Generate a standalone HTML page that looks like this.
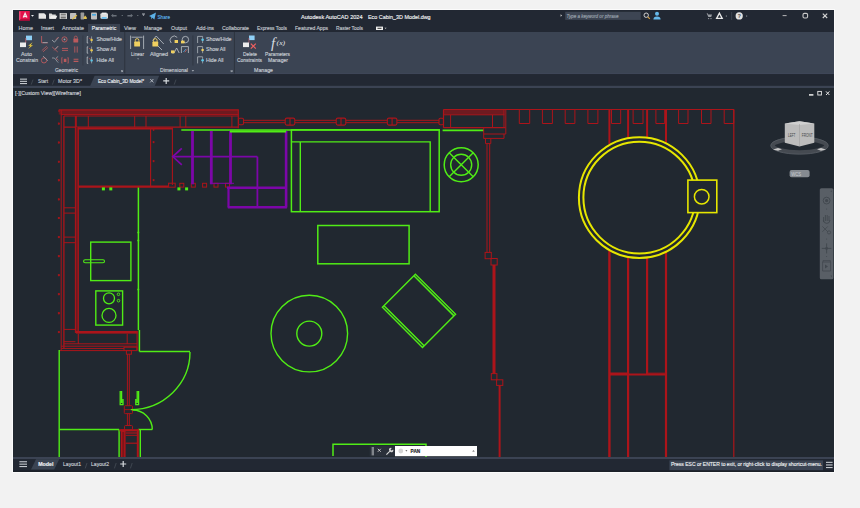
<!DOCTYPE html>
<html><head><meta charset="utf-8">
<style>
html,body{margin:0;padding:0;width:860px;height:508px;overflow:hidden;background:#f2f2f2}
svg{display:block;font-family:"Liberation Sans",sans-serif}
</style></head><body>
<svg width="860" height="508" viewBox="0 0 860 508">
<rect x="0" y="0" width="860" height="508" fill="#f2f2f2" />
<rect x="12" y="9" width="823" height="464" fill="#fbfbfb" />
<rect x="13" y="10" width="821" height="462" fill="#222833" />
<rect x="19.1" y="11" width="10.7" height="9.6" fill="#e3114a" />
<rect x="19.1" y="11.6" width="1.4" height="8.4" fill="#f2507e" />
<rect x="20" y="19.4" width="9.8" height="1.2" fill="#a00a34" />
<path d="M23.2 17.6 L25.1 13.2 L27 17.6 M23.5 17 q1.6 -1.3 3.2 0" stroke="#f6e6ec" stroke-width="1.2" fill="none"/>
<path d="M31 15 h3 l-1.5 1.8z" fill="#e8eaee"/>
<path d="M38.6 13.2 h5.6 l1.8 1.8 v3.8 h-7.4z" fill="#e6e6e6"/>
<path d="M49 13.6 h2.6 l0.8 0.9 h3.4 v4.3 h-6.8z" fill="#d8d8d8"/><path d="M49.6 18.8 l1.3-3 h6.4 l-1.3 3z" fill="#f0f0f0"/>
<rect x="59.6" y="13" width="7.4" height="6" fill="#cfcfcf"  rx="0.6"/>
<rect x="60.8" y="13.6" width="5" height="1.8" fill="#808080" />
<rect x="60.8" y="16.6" width="5" height="1.9" fill="#707070" />
<rect x="70" y="13" width="6.2" height="6" fill="#bdbdbd"  rx="0.6"/>
<path d="M72 19 l4.5-4.2 l0.8 0.8 l-4.5 4.2z" fill="#e9c13a"/>
<rect x="80.6" y="12.6" width="3.6" height="6.8" fill="#9a9a9a"  rx="0.6"/>
<path d="M83.6 17.4 l1.6-1.8 l1.6 1.8 v1.6 h-3.2z" fill="#e0c050"/>
<rect x="91" y="12.6" width="6" height="7" fill="#bfbfbf"  rx="0.8"/>
<rect x="92" y="14" width="4" height="1.6" fill="#4aa8e0" />
<rect x="100.4" y="13.2" width="7.6" height="5.6" fill="#dcdcdc"  rx="1"/>
<rect x="101.8" y="12.6" width="4.8" height="1.6" fill="#f0f0f0" />
<rect x="101.8" y="17" width="4.8" height="1.8" fill="#6cc0f0" />
<path d="M111 15.6 l2.2-1.8 v1.1 h3.4 v1.6 h-3.4 v1.1z" fill="#6a717a"/>
<rect x="121.6" y="15.2" width="1.4" height="0.8" fill="#70777f" />
<path d="M133 15.6 l-2.2-1.8 v1.1 h-3.4 v1.6 h3.4 v1.1z" fill="#6a717a"/>
<rect x="137" y="15.2" width="1.4" height="0.8" fill="#70777f" />
<path d="M142 14.2 h3 l-1.5 1.8z M142 13.3 h3 v0.5 h-3z" fill="#aeb3ba"/>
<path d="M149 16 l7-3.4 l-1.6 6.8 l-2.2-1.6 l-1 1.6 v-2.4z" fill="#5cb0e6"/>
<text x="157.5" y="18.6" font-size="5.4" fill="#5cb0e6" stroke="#5cb0e6" stroke-width="0.15" font-weight="normal" font-style="normal" text-anchor="start" textLength="12.5" lengthAdjust="spacingAndGlyphs">Share</text>
<text x="301" y="19.2" font-size="6.1" fill="#f0f2f4" stroke="#f0f2f4" stroke-width="0.15" font-weight="normal" font-style="normal" text-anchor="start" textLength="61.5" lengthAdjust="spacingAndGlyphs">Autodesk AutoCAD 2024</text>
<text x="368" y="19.2" font-size="6.1" fill="#f0f2f4" stroke="#f0f2f4" stroke-width="0.15" font-weight="normal" font-style="normal" text-anchor="start" textLength="62.6" lengthAdjust="spacingAndGlyphs">Eco Cabin_3D Model.dwg</text>
<path d="M560.6 14.3 l1.4 1.2 l-1.4 1.2z" fill="#e0e0e0"/>
<rect x="565.2" y="11.8" width="75.5" height="8.1" fill="#3d4553" />
<text x="566.5" y="18" font-size="5.2" fill="#9aa2ad" stroke="#9aa2ad" stroke-width="0.15" font-weight="normal" font-style="italic" text-anchor="start" textLength="52" lengthAdjust="spacingAndGlyphs">Type a keyword or phrase</text>
<circle cx="646.2" cy="15.2" r="2.2" stroke="#d0d0d0" stroke-width="1" fill="none"/><path d="M647.8 16.8 l2 2" stroke="#d8a040" stroke-width="1.2"/>
<circle cx="657" cy="13.8" r="2" fill="#66b8ea"/><path d="M653.4 19.6 q0-3.2 3.6-3.2 q3.6 0 3.6 3.2z" fill="#66b8ea"/>
<path d="M706.6 13.2 h1 l0.6 1.2 h3.8 l-0.8 2.6 h-2.8z" fill="#9a9ea4"/><circle cx="708.6" cy="18.6" r="0.7" fill="#9a9ea4"/><circle cx="711" cy="18.6" r="0.7" fill="#9a9ea4"/>
<path d="M716.6 18.4 L719.4 13.2 L722.2 18.4 Z" stroke="#e8e8e8" stroke-width="1.3" fill="none"/>
<rect x="725.8" y="15.6" width="1.2" height="0.9" fill="#9aa0a6" />
<rect x="731.4" y="12" width="0.7" height="8" fill="#454c57" />
<circle cx="739.2" cy="15.9" r="3.6" fill="#e2e2e2"/>
<text x="739.2" y="18" font-size="5" fill="#555" stroke="#555" stroke-width="0.15" font-weight="bold" font-style="normal" text-anchor="middle">?</text>
<rect x="746" y="15.6" width="1.2" height="0.9" fill="#9aa0a6" />
<rect x="782.6" y="15.2" width="4" height="0.9" fill="#c8c8c8" />
<rect x="803" y="13.4" width="4.6" height="4.6" rx="1.4" stroke="#c8c8c8" stroke-width="1.1" fill="none"/>
<path d="M822.8 13.6 l4.4 4.4 M827.2 13.6 l-4.4 4.4" stroke="#d8d8d8" stroke-width="1.1"/>
<rect x="88" y="23.9" width="32.1" height="8.2" fill="#3a4250" />
<text x="18.6" y="29.8" font-size="5.6" fill="#c4c9d0" stroke="#c4c9d0" stroke-width="0.15" font-weight="normal" font-style="normal" text-anchor="start" textLength="14.4" lengthAdjust="spacingAndGlyphs">Home</text>
<text x="41" y="29.8" font-size="5.6" fill="#c4c9d0" stroke="#c4c9d0" stroke-width="0.15" font-weight="normal" font-style="normal" text-anchor="start" textLength="13" lengthAdjust="spacingAndGlyphs">Insert</text>
<text x="62" y="29.8" font-size="5.6" fill="#c4c9d0" stroke="#c4c9d0" stroke-width="0.15" font-weight="normal" font-style="normal" text-anchor="start" textLength="22" lengthAdjust="spacingAndGlyphs">Annotate</text>
<text x="91.8" y="29.8" font-size="5.6" fill="#eef1f4" stroke="#eef1f4" stroke-width="0.15" font-weight="normal" font-style="normal" text-anchor="start" textLength="24.4" lengthAdjust="spacingAndGlyphs">Parametric</text>
<text x="124" y="29.8" font-size="5.6" fill="#c4c9d0" stroke="#c4c9d0" stroke-width="0.15" font-weight="normal" font-style="normal" text-anchor="start" textLength="12" lengthAdjust="spacingAndGlyphs">View</text>
<text x="144" y="29.8" font-size="5.6" fill="#c4c9d0" stroke="#c4c9d0" stroke-width="0.15" font-weight="normal" font-style="normal" text-anchor="start" textLength="18" lengthAdjust="spacingAndGlyphs">Manage</text>
<text x="171" y="29.8" font-size="5.6" fill="#c4c9d0" stroke="#c4c9d0" stroke-width="0.15" font-weight="normal" font-style="normal" text-anchor="start" textLength="16" lengthAdjust="spacingAndGlyphs">Output</text>
<text x="196" y="29.8" font-size="5.6" fill="#c4c9d0" stroke="#c4c9d0" stroke-width="0.15" font-weight="normal" font-style="normal" text-anchor="start" textLength="18" lengthAdjust="spacingAndGlyphs">Add-ins</text>
<text x="222" y="29.8" font-size="5.6" fill="#c4c9d0" stroke="#c4c9d0" stroke-width="0.15" font-weight="normal" font-style="normal" text-anchor="start" textLength="27" lengthAdjust="spacingAndGlyphs">Collaborate</text>
<text x="257" y="29.8" font-size="5.6" fill="#c4c9d0" stroke="#c4c9d0" stroke-width="0.15" font-weight="normal" font-style="normal" text-anchor="start" textLength="30" lengthAdjust="spacingAndGlyphs">Express Tools</text>
<text x="295" y="29.8" font-size="5.6" fill="#c4c9d0" stroke="#c4c9d0" stroke-width="0.15" font-weight="normal" font-style="normal" text-anchor="start" textLength="33" lengthAdjust="spacingAndGlyphs">Featured Apps</text>
<text x="336" y="29.8" font-size="5.6" fill="#c4c9d0" stroke="#c4c9d0" stroke-width="0.15" font-weight="normal" font-style="normal" text-anchor="start" textLength="27" lengthAdjust="spacingAndGlyphs">Raster Tools</text>
<rect x="376" y="26.6" width="7" height="3.4" fill="#f0f0f0" />
<rect x="377.5" y="27.8" width="4" height="1" fill="#333" />
<path d="M384.6 27.8 h2 l-1 1.2z" fill="#c8c8c8"/>
<rect x="13" y="32" width="821" height="42" fill="#3b4453" />
<rect x="13" y="73.2" width="821" height="1" fill="#40485a" />
<rect x="26" y="35.6" width="6" height="4.6" fill="#8fd0f6" />
<rect x="25.4" y="38" width="0.8" height="5" fill="#c06070" />
<rect x="20" y="42.5" width="6" height="4.6" fill="#ececec" />
<path d="M32.6 42.2 l-4.4 3.6 h2.4 l-2.6 3.2 l5 -3.8 h-2.4z" fill="#f2cf3a"/>
<text x="21" y="56.2" font-size="5.6" fill="#c9ced5" stroke="#c9ced5" stroke-width="0.15" font-weight="normal" font-style="normal" text-anchor="start" textLength="11" lengthAdjust="spacingAndGlyphs">Auto</text>
<text x="16" y="62" font-size="5.6" fill="#c9ced5" stroke="#c9ced5" stroke-width="0.15" font-weight="normal" font-style="normal" text-anchor="start" textLength="22" lengthAdjust="spacingAndGlyphs">Constrain</text>
<path d="M41.6 36 v6.8 h6.2" stroke="#bb5a5d" stroke-width="0.9" fill="none"/><path d="M42.6 42.6 h5" stroke="#9ea4ab" stroke-width="0.9"/>
<path d="M52 40 l2.4 2.2 l4.2-4.8" stroke="#9ea4ab" stroke-width="0.9" fill="none"/><path d="M56 39.5 l2.4-2.4" stroke="#bb5a5d" stroke-width="0.9"/>
<circle cx="64.5" cy="39.4" r="2.6" stroke="#bb5a5d" stroke-width="0.9" fill="none"/><circle cx="64.5" cy="39.4" r="0.9" fill="#9ea4ab"/>
<rect x="73.4" y="38.6" width="4.8" height="4" rx="0.6" fill="#bb5a5d"/><path d="M74.3 38.8 v-1.2 a1.5 1.5 0 0 1 3 0 v1.2" stroke="#bb5a5d" stroke-width="0.8" fill="none"/>
<path d="M41.8 50.6 l5-4.4 M43 51.8 l5-4.4" stroke="#bb5a5d" stroke-width="0.8"/>
<path d="M52.2 47 l5.6 5 M54.2 50.4 l3.8-4" stroke="#bb5a5d" stroke-width="0.8"/><path d="M55.4 49 l2.6-2.8" stroke="#9ea4ab" stroke-width="0.8"/>
<path d="M62 48.4 h6 M62 50.4 h6" stroke="#bb5a5d" stroke-width="0.9"/>
<path d="M74.8 46.4 v6.2 M77.2 46.4 v6.2" stroke="#bb5a5d" stroke-width="0.9"/>
<circle cx="44" cy="60.4" r="2.6" stroke="#bb5a5d" stroke-width="0.9" fill="none"/><path d="M43 56 l4.8 4.8" stroke="#9ea4ab" stroke-width="0.8"/>
<path d="M52 58 q2.4 -0.6 3.6 1.2 q1.2 2 2.6 3.4 M55.8 58.4 l2.4 -2" stroke="#9ea4ab" stroke-width="0.8" fill="none"/><path d="M56 58 l2.6 2.4" stroke="#bb5a5d" stroke-width="0.8"/>
<path d="M62.4 57.6 h-0.6 v5.6 h0.6 M67.6 57.6 h0.6 v5.6 h-0.6" stroke="#bb5a5d" stroke-width="0.9" fill="none"/><rect x="63.8" y="58.8" width="2.6" height="3.2" fill="#bb5a5d"/>
<path d="M73.6 59.2 h4.8 M73.6 61.4 h4.8" stroke="#bb5a5d" stroke-width="1.1"/>
<rect x="82.6" y="35.5" width="0.7" height="30" fill="#323944" />
<text x="54.9" y="72" font-size="5.6" fill="#c9ced5" stroke="#c9ced5" stroke-width="0.15" font-weight="normal" font-style="normal" text-anchor="start" textLength="23" lengthAdjust="spacingAndGlyphs">Geometric</text>
<path d="M121 70 l1.6 1.6 M122.6 70 v1.6 h-1.6" stroke="#bfc4ca" stroke-width="0.6" fill="none"/>
<path d="M69 70.4 l1.2 1.2" stroke="#5f6670" stroke-width="0"/>
<path d="M88.2 36.6 h-1 v6.4 h1" stroke="#c0c5cc" stroke-width="0.8" fill="none"/><path d="M88.8 38.0 l2.8 1.4" stroke="#d0605a" stroke-width="0.7"/><path d="M91.6 36.4 v6.6" stroke="#c0c5cc" stroke-width="0.6"/><circle cx="91.6" cy="40.0" r="1.2" fill="#e8c84a"/>
<path d="M88.2 46.8 h-1 v6.4 h1" stroke="#c0c5cc" stroke-width="0.8" fill="none"/><path d="M88.8 48.199999999999996 l2.8 1.4" stroke="#d0605a" stroke-width="0.7"/><path d="M91.6 46.599999999999994 v6.6" stroke="#c0c5cc" stroke-width="0.6"/><circle cx="91.6" cy="50.199999999999996" r="1.2" fill="#e8c84a"/>
<path d="M88.2 57 h-1 v6.4 h1" stroke="#c0c5cc" stroke-width="0.8" fill="none"/><path d="M88.8 58.4 l2.8 1.4" stroke="#d0605a" stroke-width="0.7"/><path d="M91.6 56.8 v6.6" stroke="#c0c5cc" stroke-width="0.6"/><circle cx="91.6" cy="60.4" r="1.2" fill="#5cc8e8"/>
<text x="96.5" y="41.1" font-size="5.6" fill="#c9ced5" stroke="#c9ced5" stroke-width="0.15" font-weight="normal" font-style="normal" text-anchor="start" textLength="25.5" lengthAdjust="spacingAndGlyphs">Show/Hide</text>
<text x="96.5" y="51.3" font-size="5.6" fill="#c9ced5" stroke="#c9ced5" stroke-width="0.15" font-weight="normal" font-style="normal" text-anchor="start" textLength="19.5" lengthAdjust="spacingAndGlyphs">Show All</text>
<text x="96.5" y="61.5" font-size="5.6" fill="#c9ced5" stroke="#c9ced5" stroke-width="0.15" font-weight="normal" font-style="normal" text-anchor="start" textLength="17.5" lengthAdjust="spacingAndGlyphs">Hide All</text>
<rect x="124.2" y="32" width="1.1" height="41.5" fill="#2e3540" />
<path d="M130.6 35.6 v13.4 M143.6 35.6 v13.4 M131.6 37.2 h11" stroke="#c0c5cc" stroke-width="0.8" fill="none"/>
<rect x="134.2" y="41.6" width="5.8" height="5" rx="0.6" fill="#f0d060"/><path d="M135.3 41.8 v-1.4 a1.8 1.8 0 0 1 3.6 0 v1.4" stroke="#f0d060" stroke-width="0.9" fill="none"/>
<text x="131" y="56.2" font-size="5.6" fill="#c9ced5" stroke="#c9ced5" stroke-width="0.15" font-weight="normal" font-style="normal" text-anchor="start" textLength="13" lengthAdjust="spacingAndGlyphs">Linear</text>
<path d="M137.2 58.6 h1.8 l-0.9 1z" fill="#c0c5cc"/>
<path d="M152.6 40.6 l3.6-4.6 l7.6 8 M157 45 l5 5" stroke="#c0c5cc" stroke-width="0.8" fill="none"/>
<rect x="152.4" y="41.6" width="5.8" height="5" rx="0.6" fill="#f0d060"/><path d="M153.5 41.8 v-1.4 a1.8 1.8 0 0 1 3.6 0 v1.4" stroke="#f0d060" stroke-width="0.9" fill="none"/>
<text x="150" y="56.2" font-size="5.6" fill="#c9ced5" stroke="#c9ced5" stroke-width="0.15" font-weight="normal" font-style="normal" text-anchor="start" textLength="18" lengthAdjust="spacingAndGlyphs">Aligned</text>
<path d="M171.2 43 a4 4 0 0 1 6 -5.6" stroke="#c0c5cc" stroke-width="0.8" fill="none"/><rect x="174.6" y="40" width="3.4" height="3" fill="#f0d060"/>
<circle cx="185.4" cy="39.6" r="3.2" stroke="#c0c5cc" stroke-width="0.8" fill="none"/><rect x="181" y="40.6" width="3.6" height="2.8" fill="#f0d060"/>
<path d="M172 53 h2 l2.6-5 l2.6 5" stroke="#c0c5cc" stroke-width="0.8" fill="none"/><rect x="171" y="50.4" width="3.6" height="2.8" fill="#f0d060"/>
<path d="M181.4 53 v-6.4 h7 v6.4" stroke="#c0c5cc" stroke-width="0.8" fill="none"/><path d="M183.4 52 l2.4 -3" stroke="#4aa8e0" stroke-width="0.8"/><path d="M184.8 52.2 l2.4 -3" stroke="#d0605a" stroke-width="0.8"/>
<rect x="192.6" y="35.5" width="0.7" height="30" fill="#2c333d" />
<text x="160" y="72" font-size="5.6" fill="#c9ced5" stroke="#c9ced5" stroke-width="0.15" font-weight="normal" font-style="normal" text-anchor="start" textLength="28" lengthAdjust="spacingAndGlyphs">Dimensional</text>
<path d="M191.6 70.2 h2.6 l-1.3 1.4z" fill="#c0c5cc"/>
<path d="M197.6 43.0 v-6.6 h5" stroke="#c0c5cc" stroke-width="0.7" fill="none"/><path d="M202.6 36.4 v6.6" stroke="#c0c5cc" stroke-width="0.6"/><circle cx="202.6" cy="39.800000000000004" r="1.3" fill="#5cc8e8"/>
<path d="M197.6 53.199999999999996 v-6.6 h5" stroke="#c0c5cc" stroke-width="0.7" fill="none"/><path d="M202.6 46.599999999999994 v6.6" stroke="#c0c5cc" stroke-width="0.6"/><circle cx="202.6" cy="50.0" r="1.3" fill="#f0d060"/>
<path d="M197.6 63.4 v-6.6 h5" stroke="#c0c5cc" stroke-width="0.7" fill="none"/><path d="M202.6 56.8 v6.6" stroke="#c0c5cc" stroke-width="0.6"/><circle cx="202.6" cy="60.2" r="1.3" fill="#5cc8e8"/>
<text x="206" y="41.1" font-size="5.6" fill="#c9ced5" stroke="#c9ced5" stroke-width="0.15" font-weight="normal" font-style="normal" text-anchor="start" textLength="25.5" lengthAdjust="spacingAndGlyphs">Show/Hide</text>
<text x="206" y="51.3" font-size="5.6" fill="#c9ced5" stroke="#c9ced5" stroke-width="0.15" font-weight="normal" font-style="normal" text-anchor="start" textLength="19.5" lengthAdjust="spacingAndGlyphs">Show All</text>
<text x="206" y="61.5" font-size="5.6" fill="#c9ced5" stroke="#c9ced5" stroke-width="0.15" font-weight="normal" font-style="normal" text-anchor="start" textLength="17.5" lengthAdjust="spacingAndGlyphs">Hide All</text>
<path d="M230.6 70 l1.6 1.6 M232.2 70 v1.6 h-1.6" stroke="#bfc4ca" stroke-width="0.6" fill="none"/>
<rect x="233.9" y="32" width="1.1" height="41.5" fill="#2e3540" />
<rect x="249" y="35.5" width="5.6" height="4.6" fill="#8fd0f6" />
<rect x="248.6" y="38" width="0.7" height="5" fill="#c06070" />
<rect x="243" y="42.5" width="6" height="4.6" fill="#ececec" />
<path d="M250.8 43.6 l5 5 M255.8 43.6 l-5 5" stroke="#f06060" stroke-width="1.2"/>
<text x="243" y="56.4" font-size="5.6" fill="#c9ced5" stroke="#c9ced5" stroke-width="0.15" font-weight="normal" font-style="normal" text-anchor="start" textLength="14" lengthAdjust="spacingAndGlyphs">Delete</text>
<text x="237" y="62.4" font-size="5.6" fill="#c9ced5" stroke="#c9ced5" stroke-width="0.15" font-weight="normal" font-style="normal" text-anchor="start" textLength="25" lengthAdjust="spacingAndGlyphs">Constraints</text>
<text x="271" y="47.6" font-size="15" fill="#d8dce1" font-style="italic" font-family="Liberation Serif">f</text>
<text x="276.6" y="45.2" font-size="6.6" fill="#e4e7eb" font-style="italic" font-family="Liberation Serif" textLength="8.6" lengthAdjust="spacingAndGlyphs">(x)</text>
<text x="265" y="56.4" font-size="5.6" fill="#c9ced5" stroke="#c9ced5" stroke-width="0.15" font-weight="normal" font-style="normal" text-anchor="start" textLength="25" lengthAdjust="spacingAndGlyphs">Parameters</text>
<text x="268" y="62.4" font-size="5.6" fill="#c9ced5" stroke="#c9ced5" stroke-width="0.15" font-weight="normal" font-style="normal" text-anchor="start" textLength="20" lengthAdjust="spacingAndGlyphs">Manager</text>
<text x="254" y="72" font-size="5.6" fill="#c9ced5" stroke="#c9ced5" stroke-width="0.15" font-weight="normal" font-style="normal" text-anchor="start" textLength="19" lengthAdjust="spacingAndGlyphs">Manage</text>
<rect x="13" y="74.3" width="821" height="12" fill="#222833" />
<rect x="13" y="85.8" width="821" height="2.2" fill="#3b4353" />
<path d="M90 86.2 L94.6 75.8 H159.2 L154.6 86.2 Z" fill="#3b4453"/>
<rect x="20" y="78.6" width="7" height="1.1" fill="#c4c8ce" />
<rect x="20" y="80.8" width="7" height="1.1" fill="#c4c8ce" />
<rect x="20" y="83.0" width="7" height="1.1" fill="#c4c8ce" />
<path d="M31.2 84.6 l1.8-5 M52.4 84.6 l1.8-5 M174.2 84.6 l1.8-5" stroke="#4a515b" stroke-width="0.7"/>
<text x="38" y="83.2" font-size="5.6" fill="#c9ced5" stroke="#c9ced5" stroke-width="0.15" font-weight="normal" font-style="normal" text-anchor="start" textLength="10" lengthAdjust="spacingAndGlyphs">Start</text>
<text x="58" y="83.2" font-size="5.6" fill="#c9ced5" stroke="#c9ced5" stroke-width="0.15" font-weight="normal" font-style="normal" text-anchor="start" textLength="24" lengthAdjust="spacingAndGlyphs">Motor 3D*</text>
<text x="98" y="83.2" font-size="5.6" fill="#eef1f4" stroke="#eef1f4" stroke-width="0.15" font-weight="normal" font-style="normal" text-anchor="start" textLength="46" lengthAdjust="spacingAndGlyphs">Eco Cabin_3D Model*</text>
<path d="M150.2 79 l3.2 3.4 M153.4 79 l-3.2 3.4" stroke="#c9ced5" stroke-width="0.8"/>
<path d="M163.2 80.9 h6 M166.2 77.9 v6" stroke="#d6dade" stroke-width="1.2"/>
<rect x="13" y="88" width="821" height="369" fill="#212830" />
<text x="15" y="95.2" font-size="5.2" fill="#cfd3d9" stroke="#cfd3d9" stroke-width="0.15" font-weight="normal" font-style="normal" text-anchor="start" textLength="66" lengthAdjust="spacingAndGlyphs">[-][Custom View][Wireframe]</text>
<rect x="58.7" y="110" width="179.6" height="4.6" fill="#6e1a20"/>
<line x1="58.7" y1="109.9" x2="238.5" y2="109.9" stroke="#ac141a" stroke-width="1.2"/>
<line x1="61" y1="114.6" x2="238.5" y2="114.6" stroke="#ac141a" stroke-width="1"/>
<line x1="64" y1="116" x2="238.3" y2="116" stroke="#ac141a" stroke-width="1"/>
<line x1="64" y1="127.2" x2="238.3" y2="127.2" stroke="#ac141a" stroke-width="1.2"/>
<line x1="238.3" y1="109.4" x2="238.3" y2="128.2" stroke="#ac141a" stroke-width="1.2"/>
<line x1="76.3" y1="116" x2="76.3" y2="127.2" stroke="#ac141a" stroke-width="1"/>
<line x1="88.3" y1="116" x2="88.3" y2="127.2" stroke="#ac141a" stroke-width="1"/>
<line x1="134.7" y1="116" x2="134.7" y2="127.2" stroke="#ac141a" stroke-width="1"/>
<line x1="146.0" y1="116" x2="146.0" y2="127.2" stroke="#ac141a" stroke-width="1"/>
<line x1="180.1" y1="116" x2="180.1" y2="127.2" stroke="#ac141a" stroke-width="1"/>
<line x1="185.8" y1="116" x2="185.8" y2="127.2" stroke="#ac141a" stroke-width="1"/>
<line x1="231.9" y1="116" x2="231.9" y2="127.2" stroke="#ac141a" stroke-width="1"/>
<line x1="59" y1="109.9" x2="59" y2="112" stroke="#ac141a" stroke-width="1"/>
<line x1="61.2" y1="110" x2="61.2" y2="350.5" stroke="#ac141a" stroke-width="1"/>
<line x1="63.9" y1="116" x2="63.9" y2="348" stroke="#ac141a" stroke-width="1.3"/>
<rect x="75.4" y="127" width="2.9" height="205" fill="#6e1a20"/>
<line x1="75.4" y1="116" x2="75.4" y2="333" stroke="#ac141a" stroke-width="1.1"/>
<line x1="78.3" y1="127" x2="78.3" y2="333" stroke="#ac141a" stroke-width="1.2"/>
<line x1="64" y1="207.8" x2="75.4" y2="207.8" stroke="#ac141a" stroke-width="1"/>
<line x1="64" y1="213.1" x2="75.4" y2="213.1" stroke="#ac141a" stroke-width="1"/>
<line x1="64" y1="237.1" x2="75.4" y2="237.1" stroke="#ac141a" stroke-width="1"/>
<line x1="64" y1="242.7" x2="75.4" y2="242.7" stroke="#ac141a" stroke-width="1"/>
<line x1="64" y1="329.4" x2="75.4" y2="329.4" stroke="#ac141a" stroke-width="1"/>
<rect x="58.2" y="122.89999999999999" width="1.4" height="1.4" stroke="#ac141a" stroke-width="0.6" fill="#ac141a" rx="0"/>
<rect x="58.2" y="141.8" width="1.4" height="1.4" stroke="#ac141a" stroke-width="0.6" fill="#ac141a" rx="0"/>
<rect x="58.2" y="161.10000000000002" width="1.4" height="1.4" stroke="#ac141a" stroke-width="0.6" fill="#ac141a" rx="0"/>
<rect x="58.2" y="179.60000000000002" width="1.4" height="1.4" stroke="#ac141a" stroke-width="0.6" fill="#ac141a" rx="0"/>
<rect x="58.2" y="198.70000000000002" width="1.4" height="1.4" stroke="#ac141a" stroke-width="0.6" fill="#ac141a" rx="0"/>
<rect x="58.2" y="217.3" width="1.4" height="1.4" stroke="#ac141a" stroke-width="0.6" fill="#ac141a" rx="0"/>
<rect x="58.2" y="236.4" width="1.4" height="1.4" stroke="#ac141a" stroke-width="0.6" fill="#ac141a" rx="0"/>
<rect x="58.2" y="255.5" width="1.4" height="1.4" stroke="#ac141a" stroke-width="0.6" fill="#ac141a" rx="0"/>
<rect x="58.2" y="274.5" width="1.4" height="1.4" stroke="#ac141a" stroke-width="0.6" fill="#ac141a" rx="0"/>
<rect x="58.2" y="293.5" width="1.4" height="1.4" stroke="#ac141a" stroke-width="0.6" fill="#ac141a" rx="0"/>
<rect x="58.2" y="312.6" width="1.4" height="1.4" stroke="#ac141a" stroke-width="0.6" fill="#ac141a" rx="0"/>
<rect x="58.2" y="331.40000000000003" width="1.4" height="1.4" stroke="#ac141a" stroke-width="0.6" fill="#ac141a" rx="0"/>
<line x1="78.3" y1="128.6" x2="172.4" y2="128.6" stroke="#ac141a" stroke-width="1.8"/>
<line x1="150.6" y1="128.6" x2="150.6" y2="186" stroke="#ac141a" stroke-width="1.1"/>
<rect x="153" y="129.4" width="1.1" height="1.2" stroke="#ac141a" stroke-width="0.5" fill="#ac141a" rx="0"/>
<rect x="153" y="141.70000000000002" width="1.1" height="1.2" stroke="#ac141a" stroke-width="0.5" fill="#ac141a" rx="0"/>
<rect x="153" y="160.70000000000002" width="1.1" height="1.2" stroke="#ac141a" stroke-width="0.5" fill="#ac141a" rx="0"/>
<rect x="153" y="179.70000000000002" width="1.1" height="1.2" stroke="#ac141a" stroke-width="0.5" fill="#ac141a" rx="0"/>
<line x1="172.4" y1="127.5" x2="172.4" y2="185" stroke="#ac141a" stroke-width="1.1"/>
<line x1="78.3" y1="186.6" x2="168.5" y2="186.6" stroke="#ac141a" stroke-width="2.2"/>
<rect x="168.6" y="183.2" width="6.6" height="4" stroke="#ac141a" stroke-width="1" fill="none" rx="0"/>
<rect x="179.8" y="183.3" width="4" height="3.8" stroke="#ac141a" stroke-width="1" fill="none" rx="0"/>
<rect x="191.3" y="183.3" width="4" height="3.8" stroke="#ac141a" stroke-width="1" fill="none" rx="0"/>
<rect x="202.6" y="183.3" width="4" height="3.8" stroke="#ac141a" stroke-width="1" fill="none" rx="0"/>
<rect x="214.0" y="183.3" width="4" height="3.8" stroke="#ac141a" stroke-width="1" fill="none" rx="0"/>
<rect x="225.5" y="183.3" width="4" height="3.8" stroke="#ac141a" stroke-width="1" fill="none" rx="0"/>
<rect x="101.9" y="187.4" width="3" height="3" fill="#50ec16"/>
<rect x="109.3" y="187.4" width="3" height="3" fill="#50ec16"/>
<rect x="177.4" y="187.4" width="3" height="3" fill="#50ec16"/>
<rect x="185.1" y="187.4" width="3" height="3" fill="#50ec16"/>
<line x1="138.4" y1="187.6" x2="138.4" y2="330" stroke="#50ec16" stroke-width="1.5"/>
<line x1="139.4" y1="330" x2="139.4" y2="351.4" stroke="#50ec16" stroke-width="1.5"/>
<circle cx="138.3" cy="232.4" r="1" fill="#50ec16"/>
<circle cx="138.3" cy="240.4" r="1" fill="#50ec16"/>
<circle cx="138.3" cy="289.5" r="1" fill="#50ec16"/>
<rect x="90.7" y="242.1" width="40.2" height="38.5" stroke="#50ec16" stroke-width="1.4" fill="none" rx="0"/>
<rect x="83.6" y="259.8" width="20.9" height="3" stroke="#50ec16" stroke-width="1.1" fill="none" rx="1.5"/>
<rect x="95.8" y="290.9" width="26.8" height="34.2" stroke="#50ec16" stroke-width="1.4" fill="none" rx="0"/>
<circle cx="109" cy="298.3" r="5.5" stroke="#50ec16" stroke-width="1.3" fill="none"/>
<circle cx="109" cy="315.4" r="7" stroke="#50ec16" stroke-width="1.3" fill="none"/>
<circle cx="118.5" cy="294.3" r="1.3" stroke="#50ec16" stroke-width="0.9" fill="none"/>
<circle cx="118.5" cy="300.7" r="1.3" stroke="#50ec16" stroke-width="0.9" fill="none"/>
<rect x="76" y="331" width="61.7" height="2.6" fill="#ac141a"/>
<line x1="78.3" y1="333.6" x2="78.3" y2="344.1" stroke="#ac141a" stroke-width="1.1"/>
<line x1="127.2" y1="333.6" x2="127.2" y2="344.1" stroke="#ac141a" stroke-width="1"/>
<line x1="137.1" y1="331" x2="137.1" y2="350.3" stroke="#ac141a" stroke-width="1.1"/>
<line x1="64" y1="341.7" x2="75.4" y2="341.7" stroke="#ac141a" stroke-width="1"/>
<line x1="64" y1="343.8" x2="137.1" y2="343.8" stroke="#ac141a" stroke-width="1"/>
<line x1="61.2" y1="346.2" x2="137.1" y2="346.2" stroke="#ac141a" stroke-width="1"/>
<line x1="61.2" y1="348.5" x2="124" y2="348.5" stroke="#ac141a" stroke-width="0.9"/>
<line x1="59.2" y1="350.6" x2="124" y2="350.6" stroke="#ac141a" stroke-width="1"/>
<rect x="124" y="347.2" width="13" height="3.4" stroke="#ac141a" stroke-width="1" fill="none" rx="0"/>
<rect x="126.4" y="350.6" width="5" height="3.6" stroke="#ac141a" stroke-width="1" fill="none" rx="0"/>
<line x1="59.2" y1="350" x2="59.2" y2="457" stroke="#50ec16" stroke-width="1.4"/>
<line x1="139.4" y1="351.4" x2="190" y2="351.4" stroke="#50ec16" stroke-width="1.5"/>
<line x1="59.2" y1="429.5" x2="119" y2="429.5" stroke="#50ec16" stroke-width="1.4"/>
<line x1="138" y1="429.5" x2="152.3" y2="429.5" stroke="#50ec16" stroke-width="1.4"/>
<line x1="119.1" y1="429.5" x2="119.1" y2="457" stroke="#50ec16" stroke-width="1.4"/>
<line x1="140.3" y1="429.5" x2="140.3" y2="457" stroke="#50ec16" stroke-width="1.4"/>
<line x1="127.4" y1="354" x2="127.4" y2="405.7" stroke="#ac141a" stroke-width="1"/>
<line x1="129.3" y1="354" x2="129.3" y2="405.7" stroke="#ac141a" stroke-width="1"/>
<rect x="124.3" y="405.7" width="8.2" height="7.9" stroke="#ac141a" stroke-width="1" fill="none" rx="1"/>
<line x1="124.3" y1="409.6" x2="132.5" y2="409.6" stroke="#ac141a" stroke-width="0.9"/>
<line x1="127.4" y1="413.6" x2="127.4" y2="425.5" stroke="#ac141a" stroke-width="1"/>
<line x1="129.3" y1="413.6" x2="129.3" y2="425.5" stroke="#ac141a" stroke-width="1"/>
<rect x="124.5" y="425.5" width="8" height="4.4" stroke="#ac141a" stroke-width="1" fill="none" rx="1"/>
<path d="M130.8 409.6 A59.5 57.6 0 0 0 190 352" stroke="#50ec16" stroke-width="1.4" fill="none"/>
<path d="M132.5 410 A19.8 19.6 0 0 1 152.3 429.6" stroke="#50ec16" stroke-width="1.4" fill="none"/>
<path d="M120.2 391 v13.6 h2.8 v-5.6 M121.6 391 v12" stroke="#50ec16" stroke-width="1.3" fill="none"/>
<path d="M138.6 391 v13.6 h-2.8 v-5.6 M137.2 391 v12" stroke="#50ec16" stroke-width="1.3" fill="none"/>
<rect x="119.6" y="429.2" width="19.4" height="2.2" fill="#ac141a"/>
<rect x="120.8" y="429.2" width="4.8" height="28" fill="#ac141a"/>
<rect x="122.3" y="432" width="1.8" height="25" fill="#7c1419"/>
<line x1="137.8" y1="429.2" x2="137.8" y2="457" stroke="#ac141a" stroke-width="2"/>
<line x1="125.6" y1="433" x2="137" y2="433" stroke="#ac141a" stroke-width="1.2"/>
<line x1="125.6" y1="435.3" x2="137" y2="435.3" stroke="#ac141a" stroke-width="1"/>
<line x1="125.6" y1="443.2" x2="137" y2="443.2" stroke="#ac141a" stroke-width="1.2"/>
<line x1="172.5" y1="156.6" x2="257.4" y2="156.6" stroke="#7c06a8" stroke-width="1.7"/>
<path d="M181.8 148.3 L172.8 156.6 L181.8 164.9" stroke="#7c06a8" stroke-width="1.7" fill="none"/>
<line x1="192.5" y1="131" x2="192.5" y2="184.3" stroke="#7c06a8" stroke-width="2.8"/>
<line x1="211.3" y1="131" x2="211.3" y2="184.3" stroke="#7c06a8" stroke-width="2.8"/>
<line x1="230.5" y1="131" x2="230.5" y2="184.3" stroke="#7c06a8" stroke-width="2.8"/>
<line x1="286.1" y1="131" x2="286.1" y2="207.5" stroke="#7c06a8" stroke-width="2.6"/>
<line x1="257.4" y1="156.6" x2="257.4" y2="207" stroke="#7c06a8" stroke-width="1.8"/>
<line x1="211" y1="183.3" x2="234" y2="183.3" stroke="#7c06a8" stroke-width="1"/>
<line x1="227" y1="187.8" x2="286.1" y2="187.8" stroke="#7c06a8" stroke-width="2.6"/>
<line x1="228.5" y1="187" x2="228.5" y2="207.5" stroke="#7c06a8" stroke-width="2.2"/>
<line x1="227.8" y1="207.3" x2="286.9" y2="207.3" stroke="#7c06a8" stroke-width="2.6"/>
<line x1="181.3" y1="130" x2="440" y2="130" stroke="#50ec16" stroke-width="1.5"/>
<line x1="230" y1="131.4" x2="286" y2="131.4" stroke="#50ec16" stroke-width="2"/>
<line x1="442.6" y1="130.4" x2="484" y2="130.4" stroke="#50ec16" stroke-width="1.7"/>
<line x1="243.5" y1="120.3" x2="439" y2="120.3" stroke="#ac141a" stroke-width="1"/>
<line x1="243.5" y1="122.7" x2="439" y2="122.7" stroke="#ac141a" stroke-width="1"/>
<rect x="238.5" y="118.3" width="5" height="6.5" stroke="#ac141a" stroke-width="1.1" fill="#212830" rx="1.2"/>
<rect x="285.2" y="118.1" width="9.6" height="7" stroke="#ac141a" stroke-width="1.1" fill="#212830" rx="1.6"/>
<line x1="290.0" y1="118.1" x2="290.0" y2="125.1" stroke="#ac141a" stroke-width="1.1"/>
<rect x="336.2" y="118.1" width="9.6" height="7" stroke="#ac141a" stroke-width="1.1" fill="#212830" rx="1.6"/>
<line x1="341.0" y1="118.1" x2="341.0" y2="125.1" stroke="#ac141a" stroke-width="1.1"/>
<rect x="387.3" y="118.1" width="9.6" height="7" stroke="#ac141a" stroke-width="1.1" fill="#212830" rx="1.6"/>
<line x1="392.1" y1="118.1" x2="392.1" y2="125.1" stroke="#ac141a" stroke-width="1.1"/>
<rect x="439" y="118.3" width="4.5" height="6.5" stroke="#ac141a" stroke-width="1.1" fill="#212830" rx="1.2"/>
<rect x="291.4" y="129.8" width="147.8" height="81.9" stroke="#50ec16" stroke-width="1.5" fill="none" rx="0"/>
<path d="M291.4 141.9 H430.2 V211.7 M300.3 141.9 V211.7" stroke="#50ec16" stroke-width="1.4" fill="none"/>
<circle cx="461.2" cy="164.8" r="17" stroke="#50ec16" stroke-width="1.5" fill="none"/>
<circle cx="461.2" cy="164.8" r="10.5" stroke="#50ec16" stroke-width="1.4" fill="none"/>
<path d="M449.2 152.8 L473.2 176.8 M473.2 152.8 L449.2 176.8" stroke="#50ec16" stroke-width="1.4" fill="none"/>
<rect x="443.5" y="110" width="61" height="4.6" fill="#6e1a20"/>
<line x1="443.5" y1="109.5" x2="734" y2="109.5" stroke="#ac141a" stroke-width="1.1"/>
<line x1="443.5" y1="109.5" x2="443.5" y2="128" stroke="#ac141a" stroke-width="1.2"/>
<line x1="443.5" y1="114.8" x2="504.5" y2="114.8" stroke="#ac141a" stroke-width="1"/>
<line x1="443.5" y1="127.6" x2="505.5" y2="127.6" stroke="#ac141a" stroke-width="1.2"/>
<line x1="450.6" y1="114.8" x2="450.6" y2="127.6" stroke="#ac141a" stroke-width="1"/>
<line x1="492.5" y1="114.8" x2="492.5" y2="127.6" stroke="#ac141a" stroke-width="1"/>
<line x1="504" y1="109.5" x2="504" y2="127.6" stroke="#ac141a" stroke-width="1"/>
<line x1="505.8" y1="109.5" x2="505.8" y2="134" stroke="#ac141a" stroke-width="1"/>
<path d="M483.7 127.6 V134 H505.8 M483.7 134 V138.4 H504 V134 M483.7 138.4 H485.5 V143.6 H490.8 V138.4" stroke="#ac141a" stroke-width="1" fill="none"/>
<line x1="487" y1="143.6" x2="487" y2="252.4" stroke="#ac141a" stroke-width="1"/>
<line x1="489.7" y1="143.6" x2="489.7" y2="252.4" stroke="#ac141a" stroke-width="1"/>
<rect x="485.1" y="252.4" width="6.2" height="6.3" stroke="#ac141a" stroke-width="1" fill="none" rx="0"/>
<rect x="491" y="258.5" width="6.2" height="6.5" stroke="#ac141a" stroke-width="1" fill="none" rx="0"/>
<line x1="494" y1="265" x2="494" y2="373.6" stroke="#ac141a" stroke-width="3"/>
<rect x="491.3" y="373.6" width="5.6" height="6.2" stroke="#ac141a" stroke-width="1" fill="none" rx="0"/>
<rect x="496.6" y="379.8" width="6.2" height="5.6" stroke="#ac141a" stroke-width="1" fill="none" rx="0"/>
<line x1="499.6" y1="385.4" x2="499.6" y2="457" stroke="#ac141a" stroke-width="2"/>
<path d="M519.3 109.5 V123.5 H529.7 V109.5" stroke="#ac141a" stroke-width="1" fill="none"/>
<path d="M542.4 109.5 V123.5 H552.4 V109.5" stroke="#ac141a" stroke-width="1" fill="none"/>
<path d="M565.2 109.5 V123.5 H574.9 V109.5" stroke="#ac141a" stroke-width="1" fill="none"/>
<path d="M587.9 109.5 V123.5 H597.9 V109.5" stroke="#ac141a" stroke-width="1" fill="none"/>
<path d="M611.5 109.5 V123.5 H620.7 V109.5" stroke="#ac141a" stroke-width="1" fill="none"/>
<path d="M633.1 109.5 V123.5 H643 V109.5" stroke="#ac141a" stroke-width="1" fill="none"/>
<path d="M655.9 109.5 V123.5 H664.7 V109.5" stroke="#ac141a" stroke-width="1" fill="none"/>
<path d="M678.6 109.5 V123.5 H688 V109.5" stroke="#ac141a" stroke-width="1" fill="none"/>
<path d="M701.5 109.5 V123.5 H711 V109.5" stroke="#ac141a" stroke-width="1" fill="none"/>
<path d="M724.2 109.5 V123.5 H733.8 V109.5" stroke="#ac141a" stroke-width="1" fill="none"/>
<line x1="733.8" y1="109.5" x2="733.8" y2="457" stroke="#ac141a" stroke-width="1.2"/>
<line x1="609.4" y1="109.5" x2="609.4" y2="144.3" stroke="#ac141a" stroke-width="2"/>
<line x1="628.1" y1="109.5" x2="628.1" y2="137.8" stroke="#ac141a" stroke-width="2"/>
<line x1="647.1" y1="109.5" x2="647.1" y2="137.4" stroke="#ac141a" stroke-width="2"/>
<line x1="666" y1="109.5" x2="666" y2="143.9" stroke="#ac141a" stroke-width="2"/>
<line x1="609.4" y1="251" x2="609.4" y2="457" stroke="#ac141a" stroke-width="2.4"/>
<line x1="628.1" y1="258" x2="628.1" y2="457" stroke="#ac141a" stroke-width="2.2"/>
<line x1="647.1" y1="258" x2="647.1" y2="374" stroke="#ac141a" stroke-width="2.2"/>
<line x1="666" y1="251" x2="666" y2="457" stroke="#ac141a" stroke-width="2.2"/>
<line x1="609" y1="374" x2="628" y2="374" stroke="#ac141a" stroke-width="3"/>
<line x1="628" y1="374.6" x2="666" y2="374.6" stroke="#ac141a" stroke-width="2"/>
<line x1="647" y1="373.2" x2="666" y2="373.2" stroke="#ac141a" stroke-width="1"/>
<circle cx="639.3" cy="197.6" r="60.4" stroke="#e6e600" stroke-width="2" fill="none"/>
<circle cx="639.3" cy="197.6" r="55.9" stroke="#e6e600" stroke-width="2" fill="none"/>
<rect x="687.9" y="180.1" width="28.9" height="32.5" stroke="#e6e600" stroke-width="1.6" fill="#212830" rx="0"/>
<circle cx="701.7" cy="196.7" r="7.3" stroke="#e6e600" stroke-width="1.5" fill="none"/>
<rect x="317.8" y="225.5" width="91.3" height="38.3" stroke="#50ec16" stroke-width="1.5" fill="none" rx="0"/>
<circle cx="309.3" cy="333.6" r="38.3" stroke="#50ec16" stroke-width="1.4" fill="none"/>
<circle cx="309.3" cy="333.6" r="12.5" stroke="#50ec16" stroke-width="1.4" fill="none"/>
<path d="M415.4 274.2 L455.6 314.3 L422.5 347.4 L382.4 307.2 Z" stroke="#50ec16" stroke-width="1.4" fill="none"/>
<path d="M413.9 275.8 L454 315.9 M384 305.7 L424.1 345.8" stroke="#50ec16" stroke-width="1.5" fill="none"/>
<path d="M333 456 V444.2 H426 V457" stroke="#50ec16" stroke-width="1.5" fill="none"/>
<rect x="809" y="94.1" width="4.4" height="1.6" fill="#e0e0e0" />
<rect x="817.8" y="91.4" width="3.6" height="3.6" stroke="#e8e8e8" stroke-width="0.9" fill="none"/>
<path d="M826 91.4 l3.4 3.6 M829.4 91.4 l-3.4 3.6" stroke="#e8e8e8" stroke-width="1"/>
<ellipse cx="799.5" cy="145.6" rx="26.8" ry="6.6" stroke="#454a51" stroke-width="4" fill="none"/>
<ellipse cx="799.5" cy="145.6" rx="28.8" ry="8.6" stroke="#5c6168" stroke-width="0.7" fill="none"/>
<path d="M773 149.5 l5 -1.4 l4 1.2 l-4 1.4z M826 149.5 l-5 -1.4 l-4 1.2 l4 1.4z" fill="#c8c8c8"/>
<path d="M784.8 123.4 L799.5 121.3 L814.3 123.4 V142.8 L799.5 146.4 L784.8 142.8 Z" fill="#bcbcbc"/>
<path d="M784.8 123.4 L799.5 121.3 L814.3 123.4 L799.5 125 Z" fill="#d0d0d0"/>
<path d="M799.5 124 V146" stroke="#a0a0a0" stroke-width="0.6"/>
<text x="788" y="136.6" font-size="4.6" fill="#4a4a4a" textLength="7.4" lengthAdjust="spacingAndGlyphs">LEFT</text>
<text x="801.8" y="136.6" font-size="4.6" fill="#4a4a4a" textLength="11" lengthAdjust="spacingAndGlyphs">FRONT</text>
<rect x="789.6" y="170" width="20" height="7.2" rx="2" fill="#868b91"/>
<text x="791.2" y="175.6" font-size="5" fill="#c9cdd1" textLength="10" lengthAdjust="spacingAndGlyphs">WCS</text>
<rect x="819.8" y="188.2" width="13.6" height="91" rx="1.5" fill="#595f66"/>
<circle cx="826.6" cy="200.6" r="3.4" stroke="#41474e" stroke-width="0.9" fill="none"/><circle cx="826.6" cy="200.6" r="1.6" fill="#41474e"/>
<circle cx="826.6" cy="209" r="0.5" fill="#41474e"/><circle cx="826.6" cy="239" r="0.5" fill="#41474e"/><circle cx="826.6" cy="256.6" r="0.5" fill="#41474e"/>
<path d="M823.6 222 v-5 M825.4 221 v-6 M827.2 221 v-6 M829 221 v-5 M823.2 220 q0.6 3.4 3.6 3.4 q3 0 3.2 -3.4" stroke="#41474e" stroke-width="0.9" fill="none"/>
<path d="M822.4 226.4 l5.4 5.4 M827.8 226.4 l-5.4 5.4" stroke="#41474e" stroke-width="0.8"/><circle cx="829" cy="232.4" r="1.6" stroke="#41474e" stroke-width="0.8" fill="none"/>
<path d="M826.6 243.4 v10 M821.8 248.4 h9.6" stroke="#41474e" stroke-width="0.9"/><circle cx="826.6" cy="248.4" r="1.4" fill="#41474e"/>
<path d="M822.6 262 h8 v9 h-8z M823 262 v-1.4 h7.4 v1.4" stroke="#41474e" stroke-width="0.8" fill="none"/><path d="M825 264.4 l3 2 l-3 2z" fill="#41474e"/>
<path d="M831.8 190.2 l-1.4 1.6 h1.4z M831.8 277.2 l-1.4 -1.6 h1.4z" fill="#41474e"/>
<rect x="369.6" y="445.8" width="25.6" height="10.6" fill="#2a303a" />
<rect x="371.6" y="447" width="2.4" height="8.4" fill="#80858b" />
<path d="M377.8 448.8 l3 3 M380.8 448.8 l-3 3" stroke="#d0d0d0" stroke-width="0.9"/>
<path d="M386.4 454.6 l3.8-3.8" stroke="#d8d8d8" stroke-width="1.1"/><path d="M389.2 450.6 a1.9 1.9 0 0 1 2.6 -2.6 l-1.2 1.4 l0.4 0.8 l0.8 0.4 l1.3 -1.2 a1.9 1.9 0 0 1 -2.6 2.6z" fill="#d8d8d8"/>
<rect x="395" y="446" width="82" height="10.2" fill="#ffffff" />
<circle cx="400.8" cy="451" r="2.4" fill="#d4d4d4"/>
<path d="M405.4 450.3 h2 l-1 1.2z" fill="#444"/>
<text x="410.6" y="453.4" font-size="4.8" fill="#222" stroke="#222" stroke-width="0.15" font-weight="bold" font-style="normal" text-anchor="start" textLength="9.6" lengthAdjust="spacingAndGlyphs">PAN</text>
<path d="M472.2 451.6 h2.6 l-1.3-1.4z" fill="#555"/>
<rect x="13" y="457" width="821" height="2" fill="#3b4353" />
<rect x="13" y="459" width="821" height="13" fill="#222833" />
<rect x="13" y="470.4" width="821" height="1.6" fill="#1c2128" />
<rect x="19.4" y="461.2" width="7.6" height="1.1" fill="#c4c8ce" />
<rect x="19.4" y="463.6" width="7.6" height="1.1" fill="#c4c8ce" />
<rect x="19.4" y="466.0" width="7.6" height="1.1" fill="#c4c8ce" />
<path d="M31 469.4 L36 459.2 H59.2 L54.2 469.4 Z" fill="#3b4453"/>
<text x="38.2" y="466.4" font-size="5.4" fill="#eef1f4" stroke="#eef1f4" stroke-width="0.15" font-weight="bold" font-style="normal" text-anchor="start" textLength="15.2" lengthAdjust="spacingAndGlyphs">Model</text>
<text x="63" y="466.4" font-size="5.6" fill="#c9ced5" stroke="#c9ced5" stroke-width="0.15" font-weight="normal" font-style="normal" text-anchor="start" textLength="18" lengthAdjust="spacingAndGlyphs">Layout1</text>
<text x="91" y="466.4" font-size="5.6" fill="#c9ced5" stroke="#c9ced5" stroke-width="0.15" font-weight="normal" font-style="normal" text-anchor="start" textLength="18" lengthAdjust="spacingAndGlyphs">Layout2</text>
<path d="M85.2 468.4 l1.8-5.4 M114.4 468.4 l1.8-5.4 M130.4 468.4 l1.8-5.4" stroke="#4a515b" stroke-width="0.7"/>
<path d="M120.2 464 h6 M123.2 461 v6" stroke="#d6dade" stroke-width="1.2"/>
<rect x="669.4" y="460.4" width="153.6" height="9.8" fill="#3b4453" />
<text x="671" y="466.4" font-size="5.9" fill="#eef0f2" stroke="#eef0f2" stroke-width="0.15" font-weight="normal" font-style="normal" text-anchor="start" textLength="151" lengthAdjust="spacingAndGlyphs">Press ESC or ENTER to exit, or right-click to display shortcut-menu.</text>
<rect x="826" y="461.8" width="6.6" height="1.1" fill="#c4c8ce" />
<rect x="826" y="464.4" width="6.6" height="1.1" fill="#c4c8ce" />
<rect x="826" y="467.0" width="6.6" height="1.1" fill="#c4c8ce" />
</svg>
</body></html>
